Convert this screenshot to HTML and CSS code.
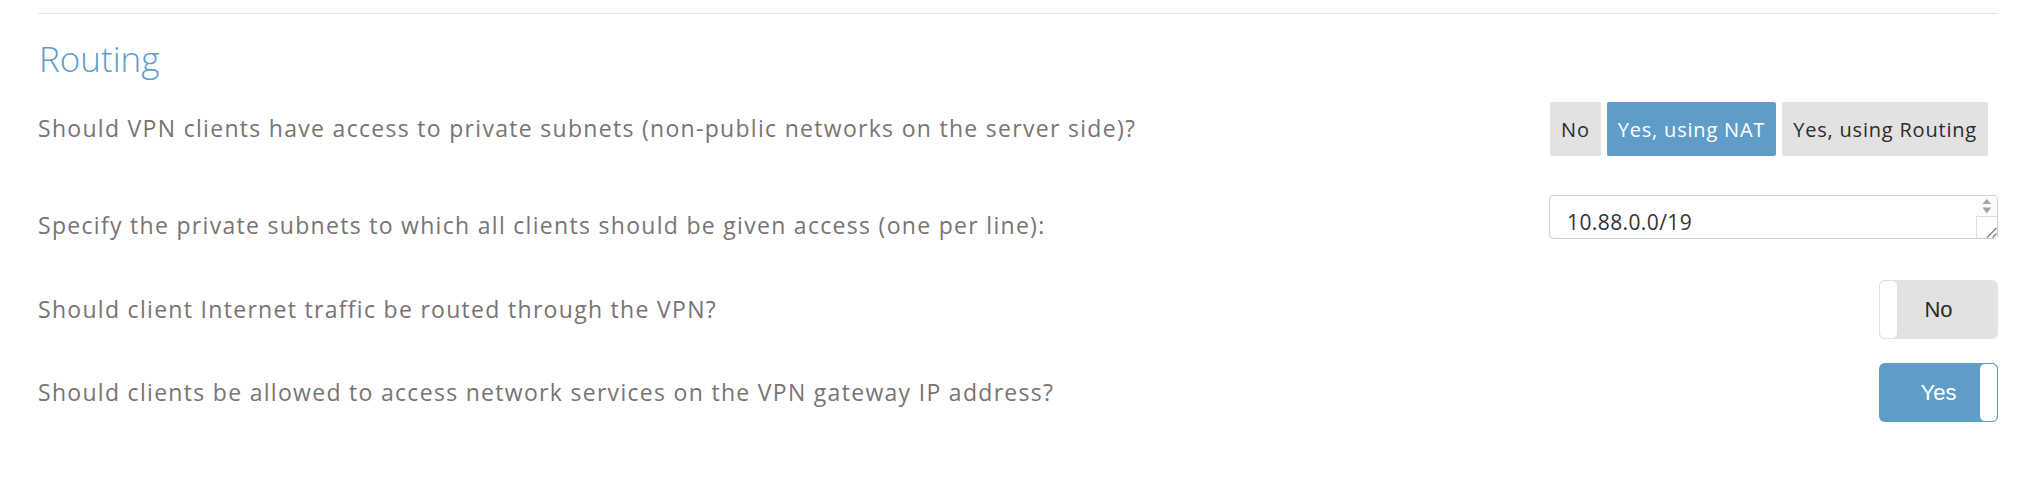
FILE: index.html
```html
<!DOCTYPE html>
<html lang="en">
<head>
<meta charset="utf-8">
<title>Routing</title>
<link rel="stylesheet" href="styles.css">
</head>
<body>
<div class="page">
  <hr class="divider">
  <h2 class="title">Routing</h2>

  <div class="row row-choice">
    <span class="label">Should VPN clients have access to private subnets (non-public networks on the server side)?</span>
    <div class="segmented">
      <button class="seg-btn">No</button>
      <button class="seg-btn active">Yes, using NAT</button>
      <button class="seg-btn">Yes, using Routing</button>
    </div>
  </div>

  <div class="row row-subnets">
    <span class="label">Specify the private subnets to which all clients should be given access (one per line):</span>
    <div class="subnets">
      <textarea class="subnets-input">10.88.0.0/19</textarea>
      <div class="scrollbar">
        <svg class="scroll-arrows" width="21" height="20" viewBox="0 0 21 20">
          <polygon points="6.5,8 10.8,3 15.2,8" fill="#a3a3a3"/>
          <polygon points="6.5,11.5 15.2,11.5 10.8,17.5" fill="#a3a3a3"/>
        </svg>
        <div class="resizer">
          <svg width="21" height="21" viewBox="0 0 21 21">
            <line x1="10" y1="20.5" x2="19.5" y2="11" stroke="#7a7a7a" stroke-width="1.2"/>
            <line x1="15.5" y1="20.5" x2="19.5" y2="16.5" stroke="#7a7a7a" stroke-width="1.2"/>
          </svg>
        </div>
      </div>
    </div>
  </div>

  <div class="row row-traffic">
    <span class="label">Should client Internet traffic be routed through the VPN?</span>
    <div class="toggle">
      <span class="toggle-knob"></span>
      <span class="toggle-text">No</span>
    </div>
  </div>

  <div class="row row-gateway">
    <span class="label">Should clients be allowed to access network services on the VPN gateway IP address?</span>
    <div class="toggle on">
      <span class="toggle-text">Yes</span>
      <span class="toggle-knob"></span>
    </div>
  </div>
</div>
</body>
</html>
```

FILE: styles.css
```css
* {
  box-sizing: border-box;
}

body {
  margin: 0;
  background: #ffffff;
  font-family: "Open Sans", sans-serif;
}

.page {
  padding: 0 33px 0 38px;
}

.divider {
  margin: 13px 0 0;
  border: 0;
  border-top: 1px solid #e5e5e5;
  height: 0;
}

.title {
  margin: 27px 0 0 1px;
  font-size: 35px;
  line-height: 35px;
  font-weight: 300;
  color: #5e9cca;
}

.row {
  display: flex;
  align-items: center;
  justify-content: space-between;
}

.row-choice {
  margin-top: 26px;
  height: 54px;
}

.row-subnets {
  margin-top: 39px;
  height: 44px;
}

.row-traffic {
  margin-top: 41px;
  height: 59px;
}

.row-gateway {
  margin-top: 24px;
  height: 59px;
}

.label {
  font-size: 23px;
  line-height: 1.5;
  color: #7a7373;
  letter-spacing: 1.3px;
}

.row-choice .label {
  margin-top: -1px;
}

.row-subnets .label {
  padding-top: 16px;
}

.segmented {
  display: flex;
  gap: 6px;
  margin-right: 10px;
}

.seg-btn {
  height: 54px;
  padding: 0 11px;
  border: 0;
  border-radius: 2px;
  background: #e2e2e2;
  color: #2b2b2b;
  font-family: "Open Sans", sans-serif;
  font-size: 20px;
  letter-spacing: 0.8px;
}

.seg-btn.active {
  background: #5f9dc8;
  color: #ffffff;
}

.subnets {
  position: relative;
  width: 449px;
  height: 44px;
}

.subnets-input {
  display: block;
  width: 100%;
  height: 100%;
  margin: 0;
  padding: 11px 30px 0 17px;
  border: 1px solid #cfd0d6;
  border-radius: 4px;
  font-family: "Open Sans", sans-serif;
  font-size: 21px;
  line-height: 1.5;
  color: #333333;
  letter-spacing: 0.4px;
  resize: none;
  overflow: hidden;
  outline: none;
}

.scrollbar {
  position: absolute;
  top: 1px;
  right: 1px;
  bottom: 1px;
  width: 21px;
  display: flex;
  flex-direction: column;
  background: #fbfbfb;
  border-radius: 0 3px 3px 0;
}

.scroll-arrows {
  display: block;
}

.resizer {
  margin-top: auto;
  width: 21px;
  height: 22px;
  background: #ffffff;
  border-top: 1px solid #dedede;
  border-left: 1px solid #dedede;
}

.resizer svg {
  display: block;
}

.toggle {
  position: relative;
  width: 119px;
  height: 59px;
  border-radius: 6px;
  background: #e2e2e2;
  display: flex;
  align-items: center;
  justify-content: center;
  font-family: "Liberation Sans", Arial, sans-serif;
  font-size: 22px;
  color: #2b2b2b;
}

.toggle-knob {
  position: absolute;
  top: 0;
  bottom: 0;
  left: 0;
  width: 19px;
  background: #ffffff;
  border: 1px solid #e0e0e0;
  border-radius: 6px;
}

.toggle.on {
  background: #5f9dc8;
  color: #ffffff;
}

.toggle.on .toggle-knob {
  left: auto;
  right: 0;
  border-color: #5f9dc8;
}
```
